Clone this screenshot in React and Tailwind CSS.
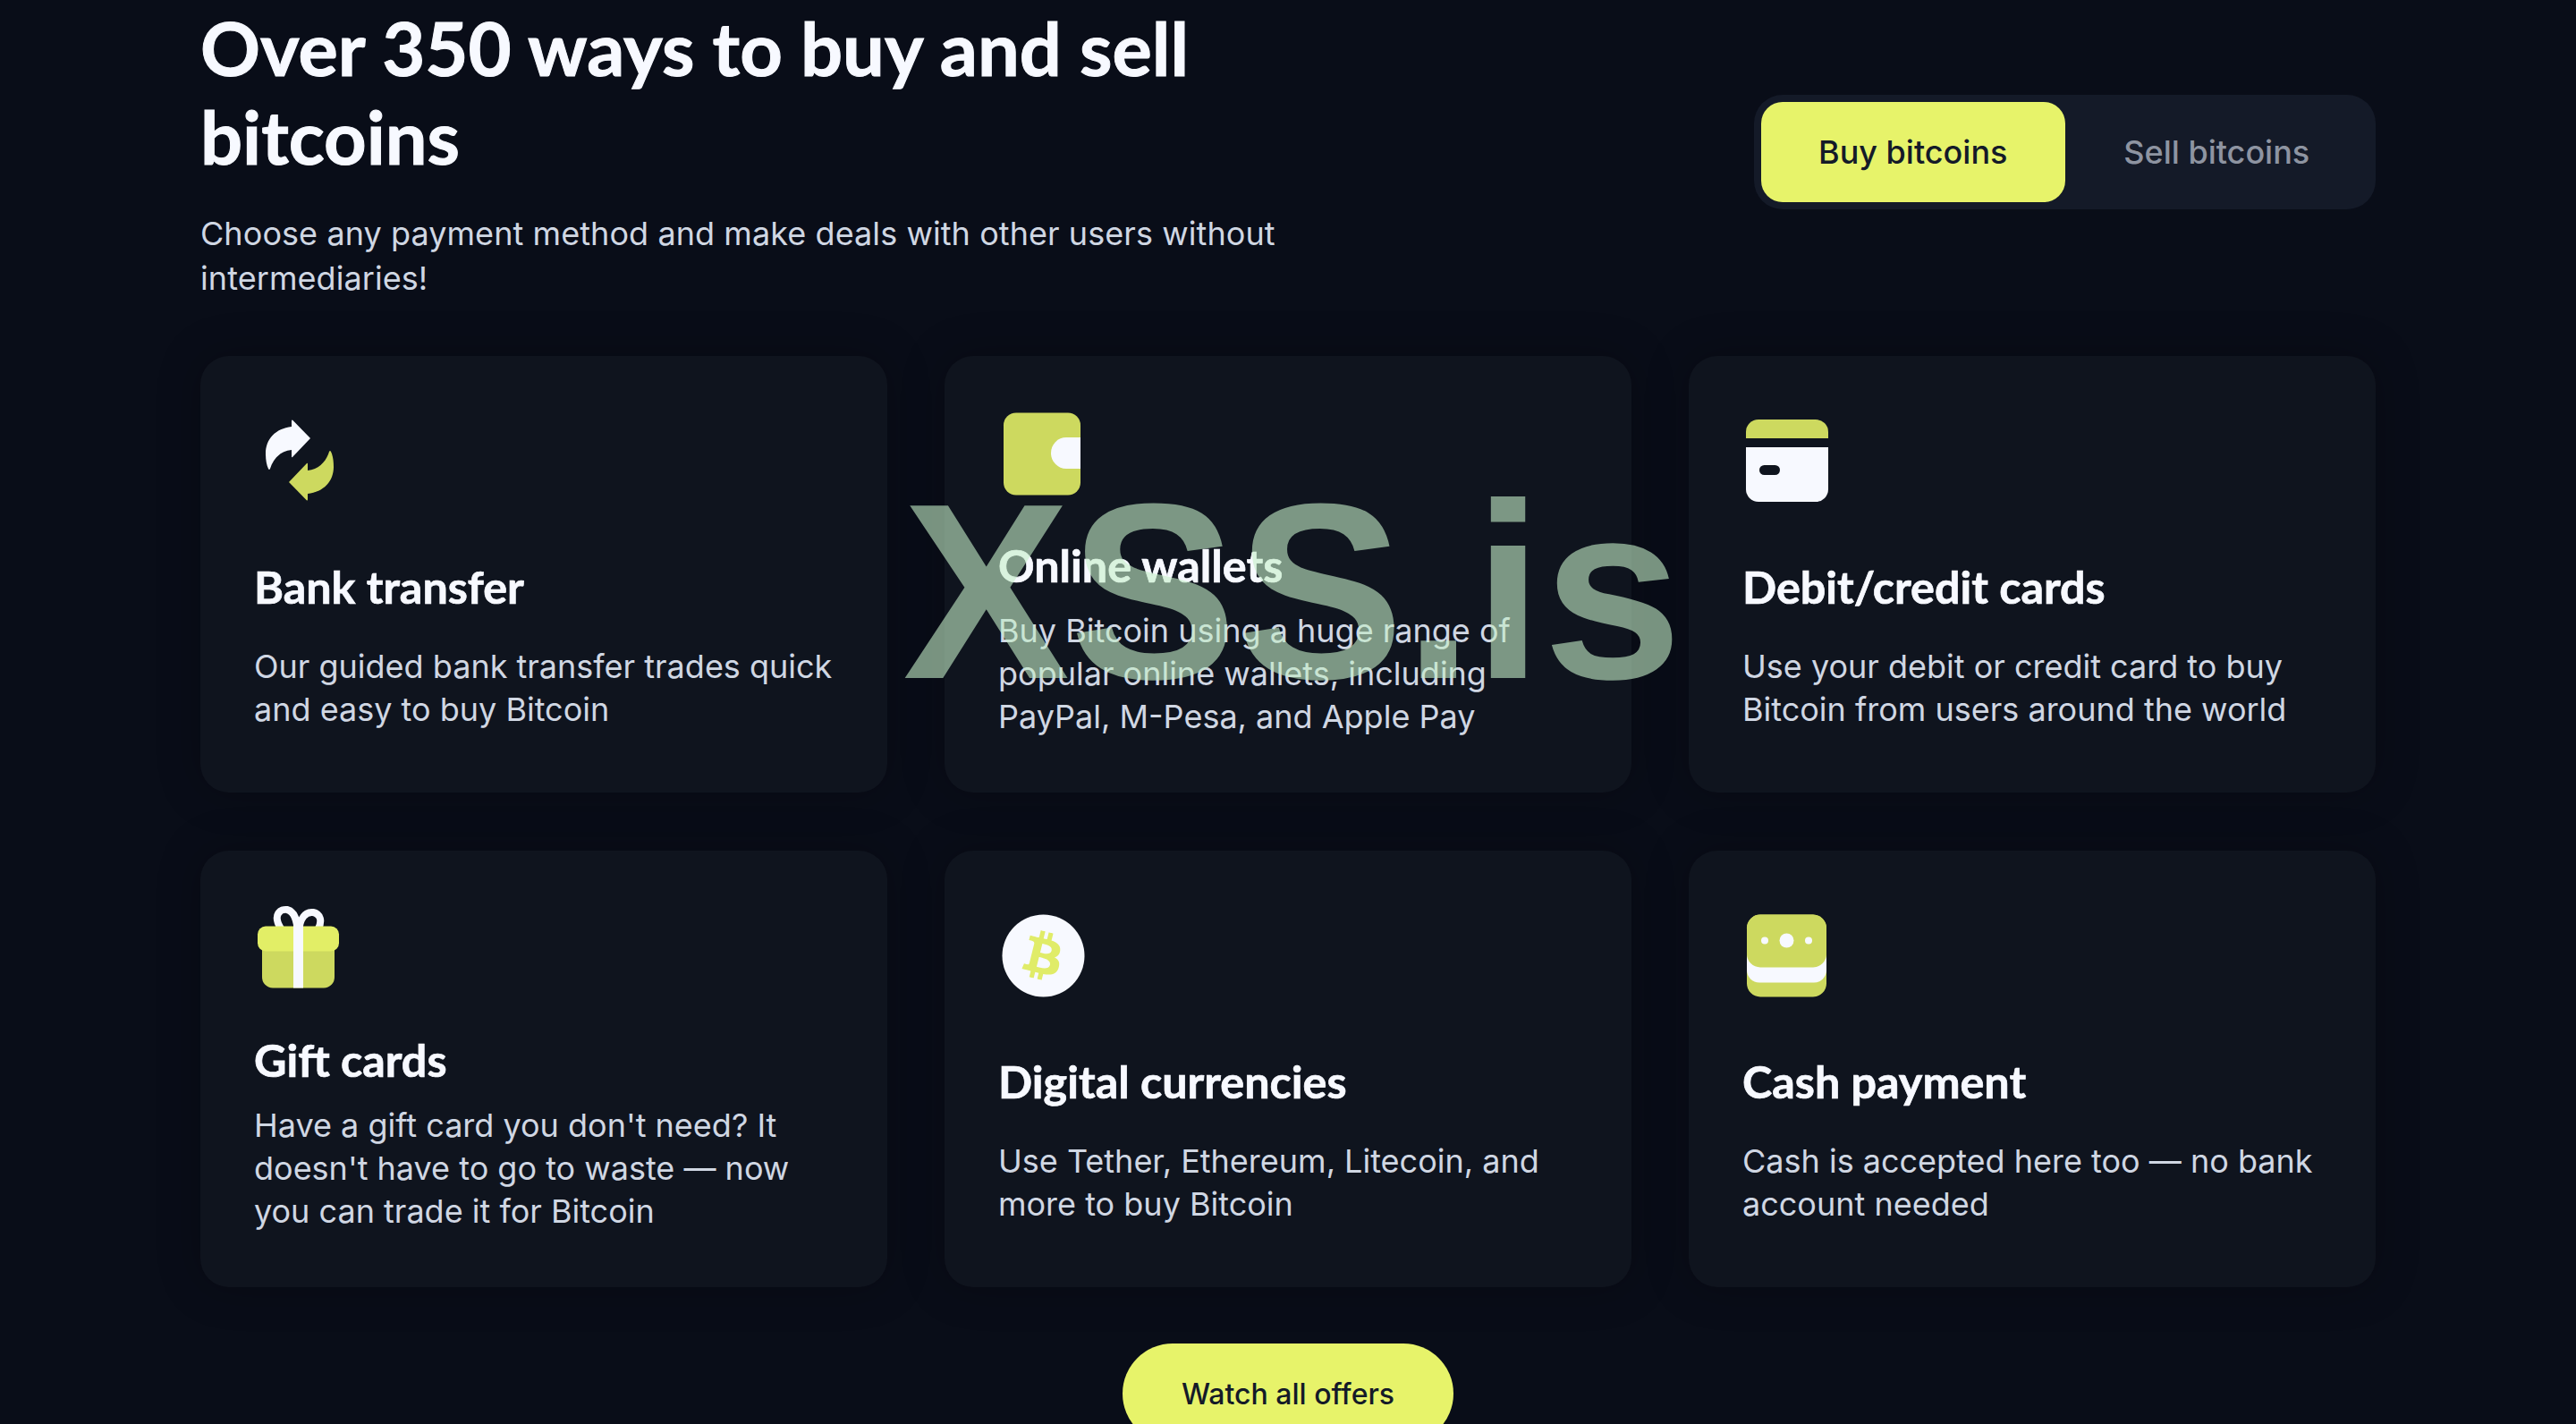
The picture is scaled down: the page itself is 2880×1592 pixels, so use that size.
import { FaBtc } from 'react-icons/fa';

const LIME = '#cdd95f';
const WHITE = '#f7f9ff';

function ArrowsIcon() {
  const arrow = 'M63 23 L43 2.5 Q42 2 42 4 L42 10 C24 12 13 24 13 40 C13 47 14 53 16 57 Q17 59 18 57 C21 47 29 37 42 36 L42 43 Q42 45 43 44 Z';
  return (
    <svg width="104" height="96" viewBox="0 0 104 96">
      <path d={arrow} fill={WHITE} />
      <path d={arrow} fill={LIME} transform="rotate(180 51 47.5)" />
    </svg>
  );
}

function WalletIcon() {
  return (
    <svg width="104" height="96" viewBox="0 0 104 96">
      <rect x="6" y="2.5" width="86" height="92" rx="14" fill={LIME} />
      <path d="M92 30 H76 A17 17.5 0 0 0 76 65 H92 Z" fill={WHITE} />
    </svg>
  );
}

function CardIcon() {
  return (
    <svg width="104" height="96" viewBox="0 0 104 96">
      <path d="M4 23 V16 A14 14 0 0 1 18 2 H82 A14 14 0 0 1 96 16 V23 Z" fill={LIME} />
      <path d="M4 33 H96 V80 A14 14 0 0 1 82 94 H18 A14 14 0 0 1 4 80 Z" fill={WHITE} />
      <rect x="19" y="53" width="23" height="11" rx="5.5" fill="#0f141e" />
    </svg>
  );
}

function GiftIcon() {
  return (
    <svg width="104" height="96" viewBox="0 0 104 96">
      <path d="M30 26 C20 10 30 4 37 5 C46 7 48 18 49 30 M50 30 C51 14 58 7 66 8 C75 10 76 18 72 26" fill="none" stroke={WHITE} strokeWidth="8" strokeLinecap="round" />
      <path d="M9 45 H90 V80 A12 12 0 0 1 78 92.5 H21 A12 12 0 0 1 9 80 Z" fill={LIME} />
      <rect x="4" y="23.5" width="91" height="28" rx="9" fill="#e2ee66" />
      <rect x="44" y="22" width="11" height="70.5" fill={WHITE} />
    </svg>
  );
}

function CoinIcon() {
  return (
    <svg width="104" height="96" viewBox="0 0 104 96">
      <circle cx="50.5" cy="48.5" r="46" fill={WHITE} />
      <g transform="rotate(14 50.5 48.5)">
        <FaBtc x="23.5" y="21.5" size={54} color="#e0ec68" />
      </g>
    </svg>
  );
}

function CashIcon() {
  return (
    <svg width="104" height="96" viewBox="0 0 104 96">
      <rect x="5" y="2.5" width="89" height="92" rx="15" fill={LIME} />
      <rect x="5" y="38" width="89" height="40.5" rx="14" fill={WHITE} />
      <rect x="5" y="2.5" width="89" height="59" rx="15" fill={LIME} />
      <circle cx="49.5" cy="31.5" r="8" fill={WHITE} />
      <circle cx="25" cy="31.5" r="4" fill={WHITE} />
      <circle cx="74" cy="31.5" r="4" fill={WHITE} />
    </svg>
  );
}

const methods = [
  { title: 'Bank transfer', text: 'Our guided bank transfer trades quick and easy to buy Bitcoin', icon: <ArrowsIcon /> },
  { title: 'Online wallets', text: 'Buy Bitcoin using a huge range of popular online wallets, including PayPal, M-Pesa, and Apple Pay', icon: <WalletIcon /> },
  { title: 'Debit/credit cards', text: 'Use your debit or credit card to buy Bitcoin from users around the world', icon: <CardIcon /> },
  { title: 'Gift cards', text: "Have a gift card you don't need? It doesn't have to go to waste — now you can trade it for Bitcoin", icon: <GiftIcon /> },
  { title: 'Digital currencies', text: 'Use Tether, Ethereum, Litecoin, and more to buy Bitcoin', icon: <CoinIcon /> },
  { title: 'Cash payment', text: 'Cash is accepted here too — no bank account needed', icon: <CashIcon /> },
];

function MethodCard({ title, text, icon }) {
  return (
    <div className="flex h-[488px] flex-col justify-around rounded-[32px] bg-[#0f141e] px-[60px] py-[52px] shadow-[0_0_48px_rgba(0,0,0,0.25)]">
      <div className="mb-[28px] h-[96px]">{icon}</div>
      <h3 className="h-[60px] font-['Lato',sans-serif] text-[50.3px] leading-[60px] font-bold text-[#f7f9ff] [-webkit-text-stroke:0.7px_#f7f9ff]">{title}</h3>
      <p className="text-[36px] leading-[48px] text-[#d0d7e3]">{text}</p>
    </div>
  );
}

export default function App() {
  return (
    <div className="relative h-screen w-full overflow-hidden bg-[#090d18] font-['Inter',sans-serif]">
      <div className="px-[224px] pt-[4px]">
        <div className="mb-[62px] flex items-center justify-between">
          <div className="w-[1240px]">
            <h1 className="w-[1150px] font-['Lato',sans-serif] text-[83px] leading-[99px] font-bold text-[#f7f9ff] [-webkit-text-stroke:1px_#f7f9ff]">
              Over 350 ways to buy and sell bitcoins
            </h1>
            <p className="mt-[34px] text-[36px] leading-[50px] tracking-[0.002em] text-[#d0d7e3]">
              Choose any payment method and make deals with other users without intermediaries!
            </p>
          </div>
          <div className="flex h-[128px] w-[695px] rounded-[32px] bg-[#141a28] p-[8px] text-[36px] font-medium">
            <button className="flex-1 rounded-[24px] bg-[#e7f36a] text-[#141a28]">Buy bitcoins</button>
            <button className="flex-1 text-[#8e94a1]">Sell bitcoins</button>
          </div>
        </div>

        <div className="grid grid-cols-3 gap-x-[64px] gap-y-[65px]">
          {methods.map((m) => (
            <MethodCard key={m.title} {...m} />
          ))}
        </div>

        <div className="mt-[63px] flex justify-center">
          <button className="h-[112px] w-[370px] rounded-full bg-[#e7f36a] pt-[2px] text-[32px] font-medium text-[#141a28]">
            Watch all offers
          </button>
        </div>
      </div>

      {/* watermark sits over the page */}
      <div className="pointer-events-none absolute top-[501px] left-[calc(50%+5px)] -translate-x-1/2 font-['Liberation_Sans',sans-serif] text-[280px] leading-[320px] font-bold whitespace-nowrap text-[#c5eec8]/60">
        XSS.is
      </div>
    </div>
  );
}
